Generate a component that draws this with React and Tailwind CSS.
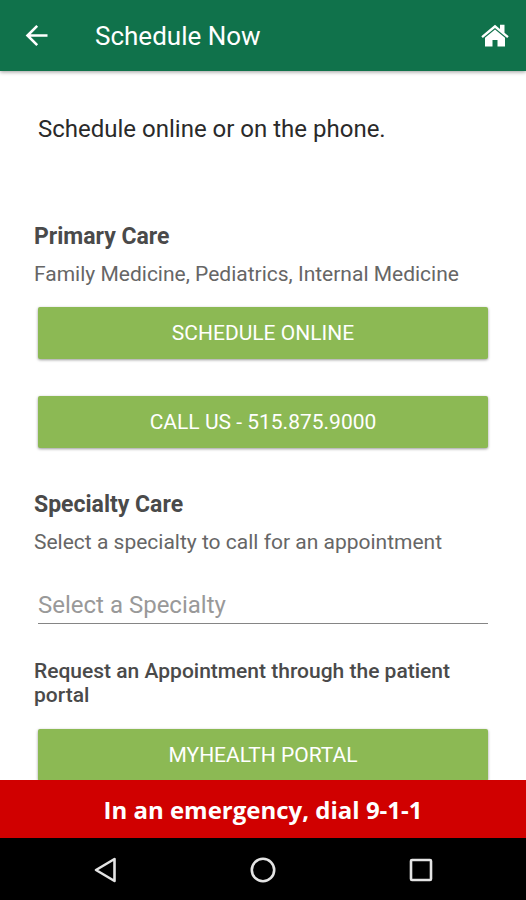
import React, { useState } from 'react';

const specialties = ['Cardiology', 'Dermatology', 'Neurology', 'Orthopedics'];

const ActionLink = ({ href, children }) => (
  <a
    href={href}
    className="mx-1 flex h-[52px] items-center justify-center rounded-xs bg-[#8cb954] pt-0.5 text-[21px] text-white shadow-[0_1px_3px_rgba(0,0,0,0.4)]"
  >
    {children}
  </a>
);

const App = () => {
  const [specialty, setSpecialty] = useState('');

  return (
    <div className="flex h-screen flex-col bg-white font-['Roboto',sans-serif] text-[#4a4a4a]">
      {/* Header */}
      <header className="z-10 flex h-[71px] shrink-0 items-center bg-[#10724b] pr-4 pl-6 text-white shadow-[0_1px_4px_rgba(0,0,0,0.4)]">
        <button type="button" aria-label="Back">
          <svg width="24" height="24" viewBox="0 0 24 24" fill="none" stroke="currentColor" strokeWidth="2.6">
            <path d="M23.5 11.5H4M13.2 1.8L3.5 11.5L13.2 21.2" />
          </svg>
        </button>
        <h1 className="ml-[47px] flex-1 text-[26px] leading-8">Schedule Now</h1>
        <button type="button" aria-label="Home">
          <svg width="30" height="24" viewBox="0 0 30 24" fill="currentColor">
            <path d="M15 .8L1.3 12.2L2.8 14L15 3.9L27.2 14L28.7 12.2L24.5 8.7V.8H20V5Z" />
            <path d="M15 5.4L5 13.7V22.5H12.5V16H17.5V22.5H25V13.7Z" />
          </svg>
        </button>
      </header>

      {/* Content */}
      <main className="min-h-0 flex-1 overflow-y-auto px-[34px] [scrollbar-width:none]">
        <p className="mx-1 mt-[42px] text-[24px] leading-8 text-[#2a2a2a]">Schedule online or on the phone.</p>

        <section className="mt-[76px]">
          <h2 className="text-[23px] leading-8 font-bold">Primary Care</h2>
          <p className="mt-[5px] text-[21px] leading-8 text-[#666666]">Family Medicine, Pediatrics, Internal Medicine</p>
          <div className="mt-[17px] flex flex-col gap-[37px]">
            <ActionLink href="#schedule">SCHEDULE ONLINE</ActionLink>
            <ActionLink href="tel:5158759000">CALL US - 515.875.9000</ActionLink>
          </div>
        </section>

        <section className="mt-[41px]">
          <h2 className="text-[23px] leading-8 font-bold">Specialty Care</h2>
          <label htmlFor="specialty" className="mt-[5px] block text-[21px] leading-8 text-[#666666]">
            Select a specialty to call for an appointment
          </label>
          <div className="mx-1 mt-[29px] border-b border-[#858585]">
            <select
              id="specialty"
              value={specialty}
              onChange={(e) => setSpecialty(e.target.value)}
              className="block h-9 w-full appearance-none bg-transparent text-[24px] text-[#999999]"
            >
              <option value="">Select a Specialty</option>
              {specialties.map((name) => (
                <option key={name} value={name}>{name}</option>
              ))}
            </select>
          </div>
        </section>

        <section className="mt-[35px] pb-6">
          <h3 className="mb-[22px] text-[21px] leading-6 font-medium">Request an Appointment through the patient portal</h3>
          <ActionLink href="#portal">MYHEALTH PORTAL</ActionLink>
        </section>
      </main>

      {/* Emergency bar */}
      <footer className="shrink-0">
        <p className="flex h-[58px] items-center justify-center bg-[#d00000] pt-0.5 font-['Open_Sans',sans-serif] text-[24px] font-bold text-white">
          In an emergency, dial 9-1-1
        </p>
        <nav className="flex h-[62px] items-center bg-black px-[26px] pt-px text-[#e4e4e4]">
          <button type="button" aria-label="Back" className="flex flex-1 justify-center">
            <svg width="26" height="26" viewBox="0 0 26 26" fill="none" stroke="currentColor" strokeWidth="2.6" strokeLinejoin="round">
              <path d="M22.5 2V24L4 13Z" />
            </svg>
          </button>
          <button type="button" aria-label="Home" className="flex flex-1 justify-center">
            <svg width="26" height="26" viewBox="0 0 26 26" fill="none" stroke="currentColor" strokeWidth="2.6">
              <circle cx="13" cy="13" r="11.2" />
            </svg>
          </button>
          <button type="button" aria-label="Recent apps" className="flex flex-1 justify-center">
            <svg width="26" height="26" viewBox="0 0 26 26" fill="none" stroke="currentColor" strokeWidth="2.6">
              <rect x="3" y="3" width="20" height="20" rx="1" />
            </svg>
          </button>
        </nav>
      </footer>
    </div>
  );
};

export default App;
